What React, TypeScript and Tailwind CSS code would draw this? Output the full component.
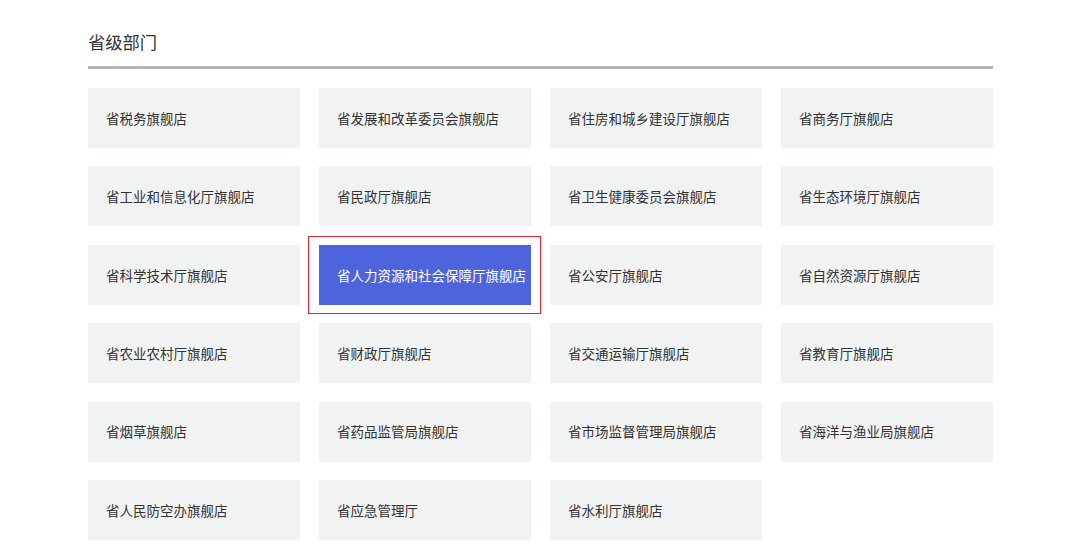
import React from "react";

const items = [
  "省税务旗舰店",
  "省发展和改革委员会旗舰店",
  "省住房和城乡建设厅旗舰店",
  "省商务厅旗舰店",
  "省工业和信息化厅旗舰店",
  "省民政厅旗舰店",
  "省卫生健康委员会旗舰店",
  "省生态环境厅旗舰店",
  "省科学技术厅旗舰店",
  "省人力资源和社会保障厅旗舰店",
  "省公安厅旗舰店",
  "省自然资源厅旗舰店",
  "省农业农村厅旗舰店",
  "省财政厅旗舰店",
  "省交通运输厅旗舰店",
  "省教育厅旗舰店",
  "省烟草旗舰店",
  "省药品监管局旗舰店",
  "省市场监督管理局旗舰店",
  "省海洋与渔业局旗舰店",
  "省人民防空办旗舰店",
  "省应急管理厅",
  "省水利厅旗舰店",
];

export default function App() {
  return (
    <div
      className="w-[1080px] h-[544px] bg-white overflow-hidden"
      style={{ fontFamily: '"Noto Sans CJK SC", "Noto Sans", sans-serif' }}
    >
      <div className="ml-[88px] w-[905px] pt-[29px]">
        <h2 className="text-[17.3px] leading-[26px] text-[#333333]">省级部门</h2>
        <div className="mt-[11px] h-[3px] bg-[#b5b5b5]" />
        <div className="mt-[19px] grid grid-cols-[repeat(4,212px)] gap-x-[19px] gap-y-[18.4px]">
          {items.map((t) => {
            const active = t === "省人力资源和社会保障厅旗舰店";
            return (
              <div
                key={t}
                className={
                  "relative h-[60px] flex items-center pl-[18px] text-[13.5px] whitespace-nowrap " +
                  (active ? "bg-[#4e64dd] text-white" : "bg-[#f1f2f2] text-[#333333]")
                }
              >
                {active && (
                  <div className="absolute top-[-9px] bottom-[-9px] left-[-11px] right-[-10px] border border-[#e3262f]" />
                )}
                <span>{t}</span>
              </div>
            );
          })}
        </div>
      </div>
    </div>
  );
}
